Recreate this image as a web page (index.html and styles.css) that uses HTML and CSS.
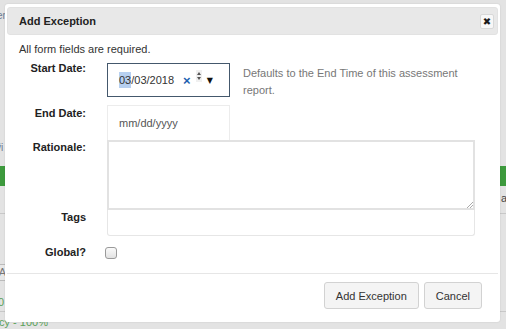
FILE: index.html
```html
<!DOCTYPE html>
<html lang="en">
<head>
    <meta charset="UTF-8">
    <meta name="viewport" content="width=device-width, initial-scale=1.0">
    <title>Add Exception</title>
    <link rel="stylesheet" href="styles.css">
</head>
<body>
    <!-- page behind the modal -->
    <div class="page">
        <div class="page-link">er</div>
        <div class="page-icon">ṽi</div>
        <div class="page-bar"></div>
        <div class="page-line top"></div>
        <div class="page-side">a</div>
        <div class="page-btn">A</div>
        <div class="page-num">0</div>
        <div class="page-line bottom"></div>
        <div class="page-foot">cy - 100%</div>
    </div>

    <div class="modal">
        <div class="modal-header">
            <h2>Add Exception</h2>
            <button class="close-btn">&#10006;</button>
        </div>

        <div class="modal-body">
            <p class="note">All form fields are required.</p>

            <div class="form-grid">
                <label class="lbl-start">Start Date:</label>
                <div class="field-row">
                    <div class="date-input focused">
                        <span class="date-text"><span class="sel">03</span>/03/2018</span>
                        <span class="clear">&#215;</span>
                        <span class="spin">
                            <span class="up"></span>
                            <span class="down"></span>
                        </span>
                        <span class="drop">&#9660;</span>
                    </div>
                    <div class="help">Defaults to the End Time of this assessment report.</div>
                </div>

                <label class="lbl-end">End Date:</label>
                <div class="date-input empty">
                    <span class="placeholder">mm/dd/yyyy</span>
                </div>

                <label class="lbl-text">Rationale:</label>
                <div class="textarea">
                    <span class="grip"></span>
                </div>

                <label class="lbl-text">Tags</label>
                <div class="text-input"></div>

                <label class="lbl-check">Global?</label>
                <div class="check-row">
                    <span class="checkbox"></span>
                </div>
            </div>
        </div>

        <div class="modal-footer">
            <button class="btn">Add Exception</button>
            <button class="btn">Cancel</button>
        </div>
    </div>
</body>
</html>
```

FILE: styles.css
```css
body {
    margin: 0;
    font-family: "Liberation Sans", Arial, sans-serif;
    font-size: 11px;
    color: #333;
    background-color: #dcdcdc;
    width: 506px;
    height: 329px;
    overflow: hidden;
}

.page {
    position: relative;
    height: 329px;
    background-color: #e3e3e3;
}

.page-link {
    position: absolute;
    left: -3px;
    top: 10px;
    font-size: 10px;
    color: #6b7c93;
}

.page-icon {
    position: absolute;
    left: -4px;
    top: 142px;
    font-size: 10px;
    color: #6b7c93;
}

.page-bar {
    position: absolute;
    left: 0;
    right: 0;
    top: 166px;
    height: 20px;
    background-color: #3d9a3d;
}

.page-line {
    position: absolute;
    left: 0;
    right: 0;
    height: 1px;
    background-color: #c8c8c8;
}

.page-line.top { top: 213px; }
.page-line.bottom { top: 311px; }

.page-side {
    position: absolute;
    left: 501px;
    top: 192px;
    font-size: 11px;
    color: #444;
}

.page-btn {
    position: absolute;
    left: -6px;
    top: 264px;
    width: 11px;
    height: 15px;
    border: 1px solid #bbb;
    background: #e8e8e8;
    color: #777;
    font-size: 11px;
    line-height: 15px;
    text-align: right;
}

.page-num {
    position: absolute;
    left: -2px;
    top: 296px;
    font-size: 11px;
    color: #5aa15a;
}

.page-foot {
    position: absolute;
    left: -1px;
    top: 316px;
    font-size: 11px;
    color: #5aa15a;
}

/* modal */
.modal {
    position: absolute;
    left: 5px;
    top: 4px;
    width: 495px;
    height: 318px;
    background-color: #fff;
    border-radius: 3px;
    box-shadow: 0 0 2px rgba(0,0,0,0.12);
    display: flex;
    flex-direction: column;
}

.modal-header {
    box-sizing: border-box;
    margin: 3px 2px 0 2px;
    height: 28px;
    background-color: #e8e8e8;
    border: 1px solid #e2e2e2;
    border-radius: 3px;
    display: flex;
    align-items: center;
    justify-content: space-between;
    padding: 0 3px 0 11px;
}

.modal-header h2 {
    margin: 0;
    font-size: 11px;
    font-weight: bold;
    color: #222;
}

.close-btn {
    box-sizing: border-box;
    width: 14px;
    height: 15px;
    padding: 0;
    border: 1px solid #d8d8d8;
    border-radius: 2px;
    background-color: #f7f7f7;
    font-size: 10px;
    color: #1a1a1a;
    line-height: 13px;
    font-family: "DejaVu Sans", sans-serif;
}

.modal-body {
    padding: 7px 14px 0 14px;
    flex: 1;
}

.note {
    margin: 0 0 6px 0;
    line-height: 15px;
}

.form-grid {
    display: grid;
    grid-template-columns: 67px 368px;
    column-gap: 21px;
}

.form-grid label {
    font-weight: bold;
    text-align: right;
    line-height: 13px;
    color: #222;
}

.form-grid .lbl-start { margin-top: -1px; }
.form-grid .lbl-end { padding-top: 2px; }
.form-grid .lbl-text { padding-top: 1px; }
.form-grid .lbl-check { align-self: center; }

.field-row {
    display: flex;
    gap: 13px;
    margin-bottom: 6px;
}

.date-input {
    box-sizing: border-box;
    width: 123px;
    height: 34px;
    display: flex;
    align-items: center;
    padding-left: 11px;
}

.date-input.focused {
    border: 1px solid #44586c;
}

.date-input.empty {
    height: 35px;
    border: 1px solid #ececec;
    border-bottom: none;
    color: #555;
}

.sel {
    background-color: #b7d0f0;
    padding: 2px 0;
}

.date-text {
    color: #333;
}

.clear {
    margin-left: 9px;
    color: #2160b0;
    font-weight: bold;
    font-size: 13px;
    line-height: 10px;
    margin-top: 2px;
}

.spin {
    display: flex;
    flex-direction: column;
    gap: 2px;
    margin-left: 5px;
    margin-top: -8px;
    padding: 2px 1px;
    background-color: #f0f0f0;
}

.spin .up {
    width: 0;
    height: 0;
    border-left: 2px solid transparent;
    border-right: 2px solid transparent;
    border-bottom: 3px solid #555;
}

.spin .down {
    width: 0;
    height: 0;
    border-left: 2px solid transparent;
    border-right: 2px solid transparent;
    border-top: 3px solid #555;
}

.drop {
    margin-left: 5px;
    font-size: 8px;
    color: #111;
    font-family: "DejaVu Sans", sans-serif;
}

.help {
    color: #777;
    line-height: 17px;
    padding-top: 2px;
    width: 225px;
}

.textarea {
    box-sizing: border-box;
    position: relative;
    width: 368px;
    height: 70px;
    border: 2px solid #e2e2e2;
}

.grip {
    position: absolute;
    right: 0;
    bottom: 0;
    width: 6px;
    height: 6px;
    background: linear-gradient(135deg, transparent 45%, #aaa 45%, #aaa 55%, transparent 55%, transparent 70%, #aaa 70%, #aaa 80%, transparent 80%);
}

.text-input {
    box-sizing: border-box;
    width: 368px;
    height: 26px;
    border: 1px solid #e6e6e6;
    border-top: none;
    border-radius: 0 0 3px 3px;
    margin-bottom: 10px;
}

.check-row {
    display: flex;
    align-items: center;
}

.checkbox {
    box-sizing: border-box;
    width: 12px;
    height: 12px;
    margin-left: -2px;
    border: 1px solid #9a9a9a;
    border-radius: 3px;
    background: linear-gradient(#fafafa, #e2e2e2);
}

.modal-footer {
    border-top: 1px solid #e6e6e6;
    margin: 0 2px;
    padding: 8px 16px 13px 0;
    display: flex;
    justify-content: flex-end;
    gap: 5px;
}

.btn {
    height: 27px;
    padding: 0 11px;
    font-family: "Liberation Sans", Arial, sans-serif;
    font-size: 11px;
    color: #333;
    background-color: #f4f4f4;
    border: 1px solid #d2d2d2;
    border-radius: 3px;
}
```
